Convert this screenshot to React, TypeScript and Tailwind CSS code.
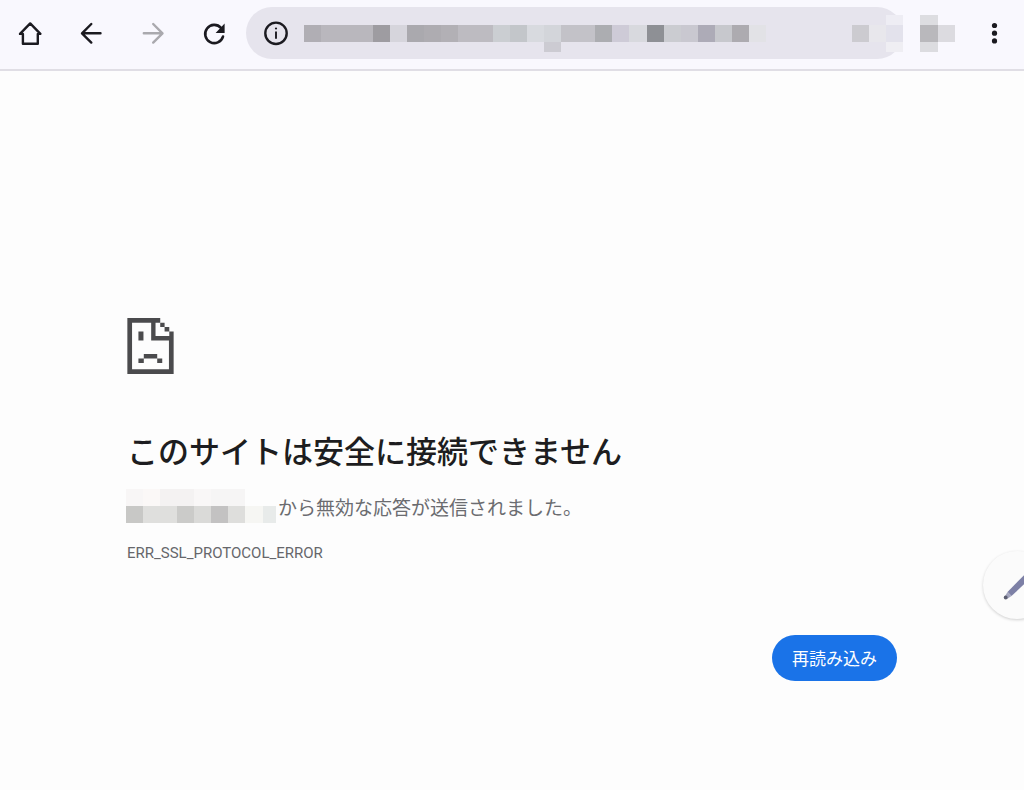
import type { ReactNode } from "react";

// x, y, width, height, colour
type Block = [number, number, number, number, string];

const urlBlocks: Block[] = [
  [0, 10, 17, 17, "#b0aeb4"],
  [17, 10, 52, 17, "#b9b7bd"],
  [69, 10, 17, 17, "#9e9ca1"],
  [86, 10, 17, 17, "#d6d5dc"],
  [103, 10, 17, 17, "#aaa9ae"],
  [120, 10, 17, 17, "#aeacb1"],
  [137, 10, 17, 17, "#b2b0b5"],
  [154, 10, 35, 17, "#bdbbc1"],
  [189, 10, 17, 17, "#cbced2"],
  [206, 10, 17, 17, "#c3c6ca"],
  [223, 10, 17, 17, "#d8dadf"],
  [240, 10, 17, 17, "#d3d5da"],
  [240, 27, 17, 10, "#cccbd2"],
  [257, 10, 34, 17, "#c3c2c8"],
  [291, 10, 17, 17, "#acadb1"],
  [308, 10, 17, 17, "#cecbd7"],
  [325, 10, 18, 17, "#d8d9de"],
  [343, 10, 17, 17, "#8e9095"],
  [360, 10, 17, 17, "#cbccd1"],
  [377, 10, 17, 17, "#c9c8d0"],
  [394, 10, 17, 17, "#adabb7"],
  [411, 10, 17, 17, "#c7c8cd"],
  [428, 10, 17, 17, "#adabb0"],
  [445, 10, 17, 17, "#e2e2e6"],
];

const actionBlocks: Block[] = [
  [0, 10, 17, 17, "#cccbd0"],
  [17, 10, 17, 17, "#e8e7ec"],
  [34, 0, 17, 10, "#eeedf4"],
  [34, 10, 17, 17, "#e3e2ec"],
  [34, 27, 17, 10, "#efeef3"],
  [68, 0, 18, 10, "#dddde1"],
  [68, 10, 18, 17, "#b9b8bc"],
  [68, 27, 18, 10, "#dcdce0"],
  [86, 10, 17, 17, "#dcdbe0"],
];

const hostBlocks: Block[] = [
  [0, 0, 17, 17, "#f8f6f6"],
  [17, 0, 17, 17, "#fbf8f7"],
  [34, 0, 34, 17, "#f4f2f2"],
  [68, 0, 17, 17, "#f9f7f7"],
  [85, 0, 34, 17, "#f6f5f5"],
  [0, 17, 17, 17, "#c8c8c6"],
  [17, 17, 34, 17, "#dfdfdd"],
  [51, 17, 17, 17, "#cbcbc9"],
  [68, 17, 17, 17, "#dadad8"],
  [85, 17, 17, 17, "#c3c2c2"],
  [102, 17, 17, 17, "#dededc"],
  [119, 17, 18, 17, "#f6f6f3"],
  [137, 17, 13, 17, "#e8ebea"],
];

const Mosaic = ({ blocks, width, height, className }: { blocks: Block[]; width: number; height: number; className?: string }) => (
  <svg width={width} height={height} className={className} shapeRendering="crispEdges" aria-hidden="true">
    {blocks.map(([x, y, w, h, fill]) => (
      <rect key={`${x}-${y}`} x={x} y={y} width={w} height={h} fill={fill} />
    ))}
  </svg>
);

const ToolButton = ({ label, disabled, children }: { label: string; disabled?: boolean; children: ReactNode }) => (
  <button type="button" aria-label={label} disabled={disabled} className="size-6 shrink-0 text-[#1b1a20] disabled:text-[#aaa9ae]">
    <svg
      viewBox="0 0 24 24"
      className="size-6 overflow-visible"
      fill="none"
      stroke="currentColor"
      strokeWidth="2.4"
      strokeLinecap="round"
      strokeLinejoin="round"
    >
      {children}
    </svg>
  </button>
);

const Toolbar = () => (
  <header className="flex items-center border-b-2 border-[#e0dee5] bg-[#f9f8fe] pt-[7px] pr-[18px] pb-2.5 pl-[18px]">
    <nav className="flex gap-[37px]" aria-label="ナビゲーション">
      <ToolButton label="ホーム">
        <path d="M12.2 2.4 22.4 12.9h-2.6v9.9H4.9v-9.900H2z" />
      </ToolButton>
      <ToolButton label="戻る">
        <path d="M21.5 12.3H3.3M12.3 3 3 12.3l9.3 9.3" />
      </ToolButton>
      <ToolButton label="進む" disabled>
        <path d="M3.8 12.3h18.4M13.2 3l9.3 9.3-9.3 9.3" />
      </ToolButton>
      <ToolButton label="再読み込み">
        <path d="M22 15.6A9.1 9.1 0 1 1 20 6.800" strokeWidth="2.600" />
        <path d="M23.600 2.600v9.300h-9z" fill="currentColor" stroke="none" />
      </ToolButton>
    </nav>

    <div className="relative mr-[79px] ml-[21px] flex h-[52px] flex-1 items-center rounded-full bg-[#e6e4ed] pl-[18px]">
      <ToolButton label="サイト情報">
        <circle cx="12" cy="12.3" r="10.7" />
        <path d="M12 10.4v7.300" strokeLinecap="butt" strokeWidth="1.900" />
        <circle cx="12" cy="7.500" r="1.100" fill="currentColor" stroke="none" />
      </ToolButton>
      <Mosaic blocks={urlBlocks} width={462} height={37} className="ml-4 shrink-0" />
      <Mosaic blocks={actionBlocks} width={103} height={37} className="absolute -right-[52px]" />
    </div>

    <ToolButton label="メニュー">
      <g fill="currentColor" stroke="none">
        <circle cx="12.5" cy="4.5" r="2.600" />
        <circle cx="12.5" cy="12.2" r="2.600" />
        <circle cx="12.5" cy="19.9" r="2.600" />
      </g>
    </ToolButton>
  </header>
);

const SadPage = () => (
  <svg width="47" height="56" viewBox="0 0 138 167" fill="#4b4b4d" aria-hidden="true">
    <path d="M0 0h98v14H14v139h110V67H71V14h13v40h54v113H0z" />
    <path d="M98 14h13v13H98zM111 27h14v13h-14zM125 40h13v14h-13z" />
    <path d="M33 40h15v27H33zM49 107h40v14H49zM33 121h16v13H33zM89 121h15v13H89z" />
  </svg>
);

const App = () => {
  return (
    <div className="relative flex min-h-screen flex-col overflow-hidden bg-[#fdfdfd] font-['Roboto','Noto_Sans_CJK_JP',sans-serif]">
      <Toolbar />

      <main className="mx-auto w-full max-w-[770px] pt-[247px]">
        <SadPage />
        <h1 className="mt-[59px] text-[31px] leading-10 font-medium text-[#1d1d20]">
          このサイトは安全に接続できません
        </h1>
        <div className="mt-4 flex items-end gap-0.5">
          <Mosaic blocks={hostBlocks} width={150} height={34} className="-ml-px shrink-0" />
          <p className="text-[19px] leading-7 text-[#6b6c70]">から無効な応答が送信されました。</p>
        </div>
        <p className="mt-5 text-[15px] leading-5 text-[#66676b]">ERR_SSL_PROTOCOL_ERROR</p>
        <div className="mt-[72px] flex justify-end">
          <button type="button" className="h-[46px] rounded-full bg-[#1a73e8] px-5 pt-1 text-[17px] text-white">
            再読み込み
          </button>
        </div>
      </main>

      {/* floating pen, half off the right edge */}
      <button
        type="button"
        aria-label="ペン"
        className="absolute top-[551px] -right-[27px] size-[68px] rounded-full bg-[#fbfbfb] shadow-[0_1px_3px_rgba(0,0,0,0.18)]"
      >
        <svg viewBox="0 0 68 68" className="size-[68px]">
          <path d="M24.500 41 48 17l5 5-24.500 23z" fill="#7d80a6" />
          <path d="M24.500 41 28.500 45 24 48l-2.500-2z" fill="#a3a5bd" />
          <circle cx="22.700" cy="46.500" r="1.900" fill="#5b5d70" />
        </svg>
      </button>
    </div>
  );
};

export default App;
